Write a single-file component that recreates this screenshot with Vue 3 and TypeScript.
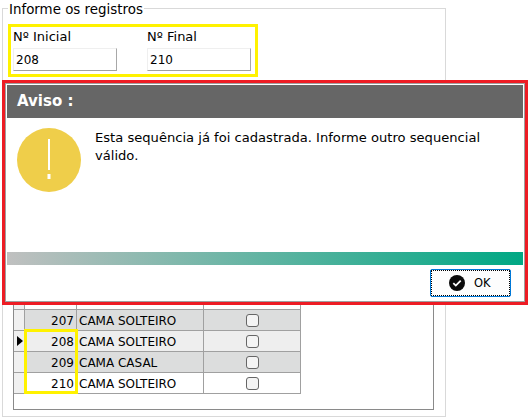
<template>
  <div class="screen">
    <div class="group">
      <span class="legend">Informe os registros</span>
      <div class="range">
        <label class="field">
          <span>Nº Inicial</span>
          <input class="entry" value="208" readonly />
        </label>
        <label class="field">
          <span>Nº Final</span>
          <input class="entry" value="210" readonly />
        </label>
      </div>
      <div class="grid">
        <div class="spacer"></div>
        <div v-for="(row, i) in rows" :key="i" class="row" :class="row.tone">
          <div class="ind"><i v-if="row.current" class="arrow"></i></div>
          <div class="num">{{ row.num }}</div>
          <div class="desc">{{ row.desc }}</div>
          <div class="chk"><span v-if="row.num" class="box"></span></div>
        </div>
      </div>
      <div class="mark"></div>
    </div>

    <div class="notice">
      <div class="dialog">
        <div class="title">Aviso :</div>
        <div class="body">
          <svg class="alert" width="64" height="64" viewBox="0 0 64 64">
            <circle cx="32" cy="32" r="32" fill="#efce4a" />
            <rect x="31" y="11" width="2" height="31" fill="#fff" />
            <rect x="30.5" y="46" width="3" height="5" fill="#fff" />
          </svg>
          <p>Esta sequência já foi cadastrada. Informe outro sequencial válido.</p>
        </div>
        <div class="bar"></div>
        <div class="foot">
          <button class="ok">
            <svg width="16" height="16" viewBox="0 0 16 16">
              <circle cx="8" cy="8" r="8" fill="#0b0b0b" />
              <path d="M4.3 8.2l2.5 2.4 4.9-5" fill="none" stroke="#fff" stroke-width="1.8" />
            </svg>
            <span>OK</span>
          </button>
        </div>
      </div>
    </div>
  </div>
</template>

<script setup lang="ts">
// the first row sits behind the dialog, only its column lines show
const rows = [
  { num: null, desc: '', tone: 'white', current: false },
  { num: 207, desc: 'CAMA SOLTEIRO', tone: 'dark', current: false },
  { num: 208, desc: 'CAMA SOLTEIRO', tone: 'light', current: true },
  { num: 209, desc: 'CAMA CASAL', tone: 'dark', current: false },
  { num: 210, desc: 'CAMA SOLTEIRO', tone: 'white', current: false }
]
</script>

<style>
html, body {
  margin: 0;
  background: #fff;
}
</style>

<style scoped>
.screen {
  position: relative;
  width: 530px;
  height: 419px;
  overflow: hidden;
  background: #fff;
  font-family: Tahoma, "DejaVu Sans", sans-serif;
  color: #000;
}

.group {
  position: relative;
  box-sizing: border-box;
  width: 444px;
  height: 409px;
  margin: 8px 0 0 2px;
  padding: 15px 10px 7px;
  border: 1px solid #d9d9d9;
}

.legend {
  position: absolute;
  left: 5px;
  top: -7px;
  padding: 0 1px;
  background: #fff;
  font-size: 13.4px;
  line-height: 16px;
}

.range {
  display: flex;
  gap: 30px;
  box-sizing: border-box;
  width: 250px;
  height: 53px;
  margin-left: -5px;
  padding: 1px 0 0 2px;
  border: 3px solid #fff200;
}

.field {
  display: flex;
  flex-direction: column;
  width: 104px;
  font-size: 13px;
  line-height: 17px;
}

.entry {
  box-sizing: border-box;
  width: 104px;
  height: 23px;
  margin-top: 3px;
  padding: 0 2px;
  border: 1px solid #efefef;
  border-right-color: #a8a8a8;
  border-bottom-color: #a0a0a0;
  font: 12px Tahoma, "DejaVu Sans", sans-serif;
  outline: none;
}

.grid {
  display: flex;
  flex-direction: column;
  box-sizing: border-box;
  width: 421px;
  height: 326px;
  margin: 7px 0 0 0;
  padding-bottom: 15px;
  border: 1px solid #8a8a8a;
}

.spacer {
  flex: 1;
}

.row {
  display: flex;
  flex: none;
  width: 287px;
  height: 21px;
  border-bottom: 1px solid #a0a0a0;
  box-sizing: border-box;
  font-size: 12px;
  line-height: 22px;
}

.dark > div {
  background: #dcdddd;
}

.light > div {
  background: #eee;
}

.white > div {
  background: #fff;
}

.row > div {
  box-sizing: border-box;
  border-right: 1px solid #a0a0a0;
}

.row > .ind {
  position: relative;
  width: 11px;
  background: #f0f0f0;
}

.arrow {
  position: absolute;
  left: 3px;
  top: 5px;
  border-left: 6px solid #000;
  border-top: 5px solid transparent;
  border-bottom: 5px solid transparent;
}

.num {
  width: 52px;
  padding-right: 2px;
  text-align: right;
}

.desc {
  width: 127px;
  padding-left: 2px;
  white-space: nowrap;
}

.chk {
  display: flex;
  flex: 1;
  align-items: center;
  justify-content: center;
}

.box {
  box-sizing: border-box;
  width: 13px;
  height: 13px;
  border: 1px solid #666;
  border-radius: 3px;
  background: #f4f4f4;
}

.mark {
  position: absolute;
  left: 21px;
  top: 320px;
  box-sizing: border-box;
  width: 54px;
  height: 65px;
  border: 3px solid #fff200;
}

.notice {
  position: absolute;
  left: 2px;
  top: 80px;
  box-sizing: border-box;
  width: 526px;
  height: 225px;
  border: 3px solid #ed1c24;
}

.dialog {
  display: flex;
  flex-direction: column;
  box-sizing: border-box;
  height: 100%;
  padding: 1px;
  border: 1px solid #a0a0a0;
  background: #fff;
}

.title {
  flex: none;
  height: 33px;
  padding-left: 10px;
  background: #666;
  color: #fff;
  font-size: 15px;
  font-weight: bold;
  line-height: 32px;
}

.body {
  display: flex;
  flex: 1;
  gap: 14px;
  padding: 10px 10px 0;
}

.alert {
  flex: none;
}

.body p {
  margin: 1px 0 0;
  font-size: 13.1px;
  line-height: 18px;
}

.bar {
  flex: none;
  height: 13px;
  background: linear-gradient(to right, #c0c0c0, #00a884);
}

.foot {
  display: flex;
  flex: none;
  justify-content: flex-end;
  height: 35px;
  padding: 4px 12px 0 0;
  box-sizing: border-box;
}

.ok {
  display: flex;
  align-items: center;
  gap: 9px;
  box-sizing: border-box;
  width: 81px;
  height: 28px;
  padding: 0 0 0 18px;
  border: 1px solid #0078d7;
  border-radius: 2px;
  background: #fdfdfd;
  outline: 1px dotted #000;
  outline-offset: -2px;
  font: 11.5px Tahoma, "DejaVu Sans", sans-serif;
}
</style>
